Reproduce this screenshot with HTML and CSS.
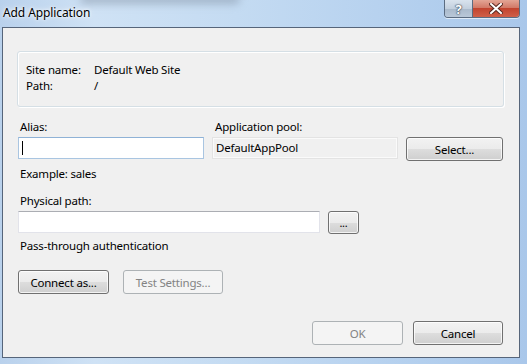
FILE: index.html
```html
<!DOCTYPE html>
<html lang="en">

<head>
    <meta charset="UTF-8">
    <title>Add Application</title>
    <link rel="stylesheet" href="styles.css">
</head>

<body>
    <div class="window">
        <div class="titlebar">
            <span class="behind"></span>
            <span class="title">Add Application</span>
            <div class="caption-buttons">
                <span class="cap help">?</span>
                <span class="cap close">
                    <svg width="14" height="11" viewBox="0 0 14 11">
                        <path d="M2 1 L12 10 M12 1 L2 10" stroke="#5a2a22" stroke-width="4" stroke-linecap="square" />
                        <path d="M2 1 L12 10 M12 1 L2 10" stroke="#fff" stroke-width="2" stroke-linecap="square" />
                    </svg>
                </span>
            </div>
        </div>

        <div class="client">
            <div class="group">
                <div class="info-row"><span class="info-key">Site name:</span><span>Default Web Site</span></div>
                <div class="info-row"><span class="info-key">Path:</span><span>/</span></div>
            </div>

            <div class="alias-grid">
                <label class="label">Alias:</label>
                <label class="label pool-label">Application pool:</label>
                <span></span>
                <div class="textbox focused"><span class="caret"></span></div>
                <div class="textbox readonly">DefaultAppPool</div>
                <button class="btn">Select...</button>
            </div>
            <div class="hint">Example: sales</div>

            <label class="label path-label">Physical path:</label>
            <div class="path-row">
                <div class="textbox path-box"></div>
                <button class="btn browse">...</button>
            </div>
            <div class="hint auth">Pass-through authentication</div>

            <div class="button-row">
                <button class="btn connect">Connect as...</button>
                <button class="btn test" disabled>Test Settings...</button>
            </div>

            <div class="dialog-buttons">
                <button class="btn ok" disabled>OK</button>
                <button class="btn cancel">Cancel</button>
            </div>
        </div>
    </div>
</body>

</html>
```

FILE: styles.css
```css
body {
    margin: 0;
    font-family: "Segoe UI", "Noto Sans", sans-serif;
    font-size: 11.5px;
    letter-spacing: -0.2px;
    color: #000;
    overflow: hidden;
}

.window {
    width: 527px;
    height: 364px;
    background: linear-gradient(90deg, #b9d1ec 0%, #cfe2f5 18%, #c4dbf2 45%, #b3cfee 80%, #a9c7ea 100%);
    display: flex;
    flex-direction: column;
    position: relative;
    overflow: hidden;
}

.titlebar {
    height: 27px;
    display: flex;
    align-items: flex-start;
    position: relative;
}

/* blurred shape of the window behind the glass */
.behind {
    position: absolute;
    left: 80px;
    top: -6px;
    width: 160px;
    height: 10px;
    border-radius: 5px;
    background: #8393a6;
    filter: blur(4px);
    opacity: 0.55;
}

.title {
    position: relative;
    margin: 5px 0 0 3px;
    line-height: 16px;
    font-size: 12px;
    letter-spacing: -0.1px;
    text-shadow: 0 0 6px #fff, 0 0 3px #fff;
}

.caption-buttons {
    margin-left: auto;
    margin-right: 7px;
    display: flex;
    border: 1px solid #5b6c81;
    border-top: none;
    border-radius: 0 0 4px 4px;
    overflow: hidden;
    box-shadow: 0 1px 0 rgba(255, 255, 255, 0.6);
}

.cap {
    height: 17px;
    display: flex;
    align-items: center;
    justify-content: center;
}

.help {
    width: 27px;
    border-right: 1px solid #5b6c81;
    background: linear-gradient(#d9e3ee 0%, #c3d0de 50%, #a9b9cb 51%, #b9c8d8 100%);
    color: #fff;
    font-weight: bold;
    font-size: 13px;
    text-shadow: 0 0 1px #3c4a5c, 0 0 1px #3c4a5c, 0 0 2px #3c4a5c;
}

.close {
    width: 46px;
    background: linear-gradient(#e3a595 0%, #d27a68 45%, #c2442f 50%, #d06049 100%);
}

.client {
    margin: 0 7px 0 2px;
    height: 331px;
    box-sizing: border-box;
    background: #f0f0f0;
    border: 1px solid #56657a;
    padding: 0 16px 0 15px;
    display: flex;
    flex-direction: column;
}

.group {
    margin: 23px -1px 0;
    height: 56px;
    box-sizing: border-box;
    border: 1px solid #d5dfe5;
    border-radius: 3px;
    box-shadow: inset 1px 1px 0 #fff, 1px 1px 0 #fff;
    padding: 10px 8px 0;
}

.info-row {
    display: flex;
    line-height: 16px;
}

.info-key {
    width: 68px;
}

.label {
    line-height: 16px;
    padding-left: 2px;
}

.alias-grid {
    margin-top: 12px;
    display: grid;
    grid-template-columns: 186px 186px 1fr;
    column-gap: 8px;
    row-gap: 2px;
    align-items: start;
}

.pool-label {
    padding-left: 3px;
}

.textbox {
    height: 22px;
    box-sizing: border-box;
    background: #fff;
    border: 1px solid #e2e3ea;
    border-top-color: #abadb3;
    line-height: 20px;
    padding-left: 3px;
}

.focused {
    border-color: #a9c5e1;
    border-top-color: #8fb2d6;
    display: flex;
    align-items: center;
}

.caret {
    width: 1px;
    height: 14px;
    background: #000;
}

.readonly {
    background: #f0f0f0;
    border-color: #e3e3e3;
    box-shadow: inset 0 0 0 1px #fafafa;
}

.btn {
    font: inherit;
    letter-spacing: inherit;
    color: #000;
    height: 24px;
    box-sizing: border-box;
    border: 1px solid #707070;
    border-radius: 3px;
    background: linear-gradient(#f2f2f2 0%, #ebebeb 50%, #dddddd 51%, #cfcfcf 100%);
    box-shadow: inset 0 0 0 1px rgba(255, 255, 255, 0.75);
    padding: 0;
}

.btn:disabled {
    color: #838383;
    border-color: #adb2b5;
    background: #f4f4f4;
    box-shadow: none;
}

.hint {
    margin-top: 5px;
    line-height: 16px;
    padding-left: 2px;
}

.path-label {
    margin-top: 11px;
}

.path-row {
    margin-top: 2px;
    display: flex;
    gap: 8px;
    align-items: flex-start;
}

.path-box {
    width: 302px;
}

.browse {
    width: 31px;
    height: 23px;
    font-size: 11px;
}

.auth {
    margin-top: 4px;
}

.button-row {
    margin-top: 16px;
    display: flex;
    gap: 14px;
}

.connect {
    width: 91px;
}

.test {
    width: 100px;
}

.dialog-buttons {
    margin-top: 27px;
    display: flex;
    justify-content: flex-end;
    gap: 10px;
}

.ok {
    width: 91px;
}

.cancel {
    width: 90px;
}
```
